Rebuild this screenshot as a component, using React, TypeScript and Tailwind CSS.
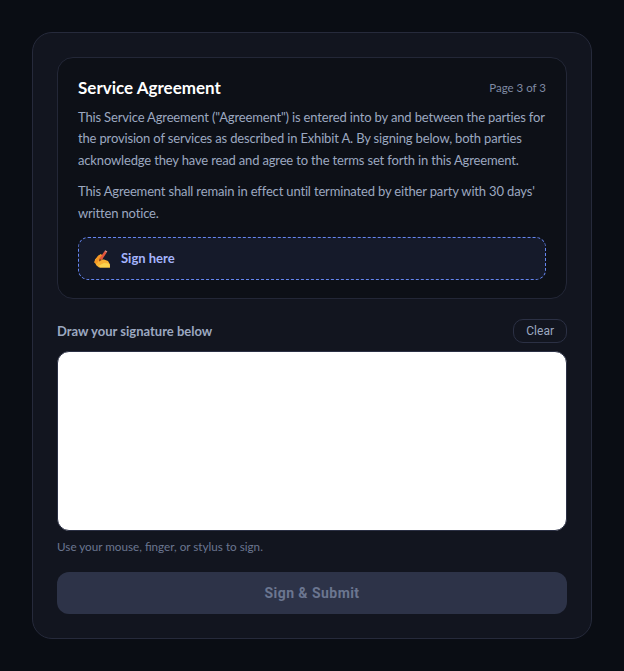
function WritingHand() {
  return (
    <svg width="18" height="18" viewBox="0 0 18 18" className="shrink-0">
      <path d="M2 9.5 5.5 5.5 8 4 10 6.5 9 9.5 11 9.5 15 11 17 14.5 17 17.5 6 17.5 3.5 15.5 1.5 12Z" fill="#f9b233" />
      <path d="M1 12.5 5 6 7.5 4.5 9 7 6 10 4 13.5Z" fill="#f59424" />
      <path d="M6 15.5 11 13 16 13.5 17 17.5 7 17.5Z" fill="#fcd34d" />
      <path d="M6.5 8.5 11.5 1.2 13.7 2.6 8.8 10Z" fill="#e2553d" />
      <path d="M11.5 1.2 12.2.3 14.3 1.6 13.7 2.6Z" fill="#f29a8c" />
      <path d="M6.5 8.5 8.8 10 6 11.5Z" fill="#7c3a1d" />
    </svg>
  );
}

export default function App() {
  return (
    <div className="min-h-screen bg-[#0a0d14] p-8 font-['Lato',sans-serif]">
      <div className="rounded-[20px] border border-[#262a3b] bg-[#12151f] p-6">
        <div className="rounded-2xl border border-[#232737] bg-[#0d1017] px-5 pt-5 pb-[18px]">
          <div className="flex items-center justify-between">
            <h2 className="text-[17px] leading-5 font-bold text-white">Service Agreement</h2>
            <span className="text-[11.5px] text-[#7f8aa3]">Page 3 of 3</span>
          </div>
          <p className="mt-[9px] text-[13px] leading-[21.4px] tracking-[-0.16px] text-[#9ca8c0]">
            This Service Agreement ("Agreement") is entered into by and between the parties for the provision of services as described in Exhibit A. By signing below, both parties acknowledge they have read and agree to the terms set forth in this Agreement.
          </p>
          <p className="mt-[10px] text-[13px] leading-[21.4px] tracking-[-0.16px] text-[#9ca8c0]">
            This Agreement shall remain in effect until terminated by either party with 30 days' written notice.
          </p>
          <div className="mt-[13px] flex h-[43px] items-center gap-[10px] rounded-[10px] border border-dashed border-[#6586f0] bg-[#151a2a] px-[14px]">
            <WritingHand />
            <span className="pt-px text-[13px] font-bold text-[#a5b4fc]">Sign here</span>
          </div>
        </div>
        <div className="mt-5 flex items-center justify-between">
          <span className="pt-px text-[13px] font-bold text-[#9ca8c0]">Draw your signature below</span>
          <button className="h-6 rounded-[10px] border border-[#2b3044] px-3 font-['Roboto',sans-serif] text-xs text-[#9ca8c0]">Clear</button>
        </div>
        <div className="mt-2 h-[180px] rounded-xl border border-[#2b3044] bg-white" />
        <p className="mt-[7px] text-[11.7px] leading-4 text-[#6b7690]">Use your mouse, finger, or stylus to sign.</p>
        <button className="mt-[18px] h-[42px] w-full rounded-xl bg-[#2d3348] font-['Roboto',sans-serif] text-sm font-bold tracking-[0.45px] text-[#6b7690]">Sign &amp; Submit</button>
      </div>
    </div>
  );
}
